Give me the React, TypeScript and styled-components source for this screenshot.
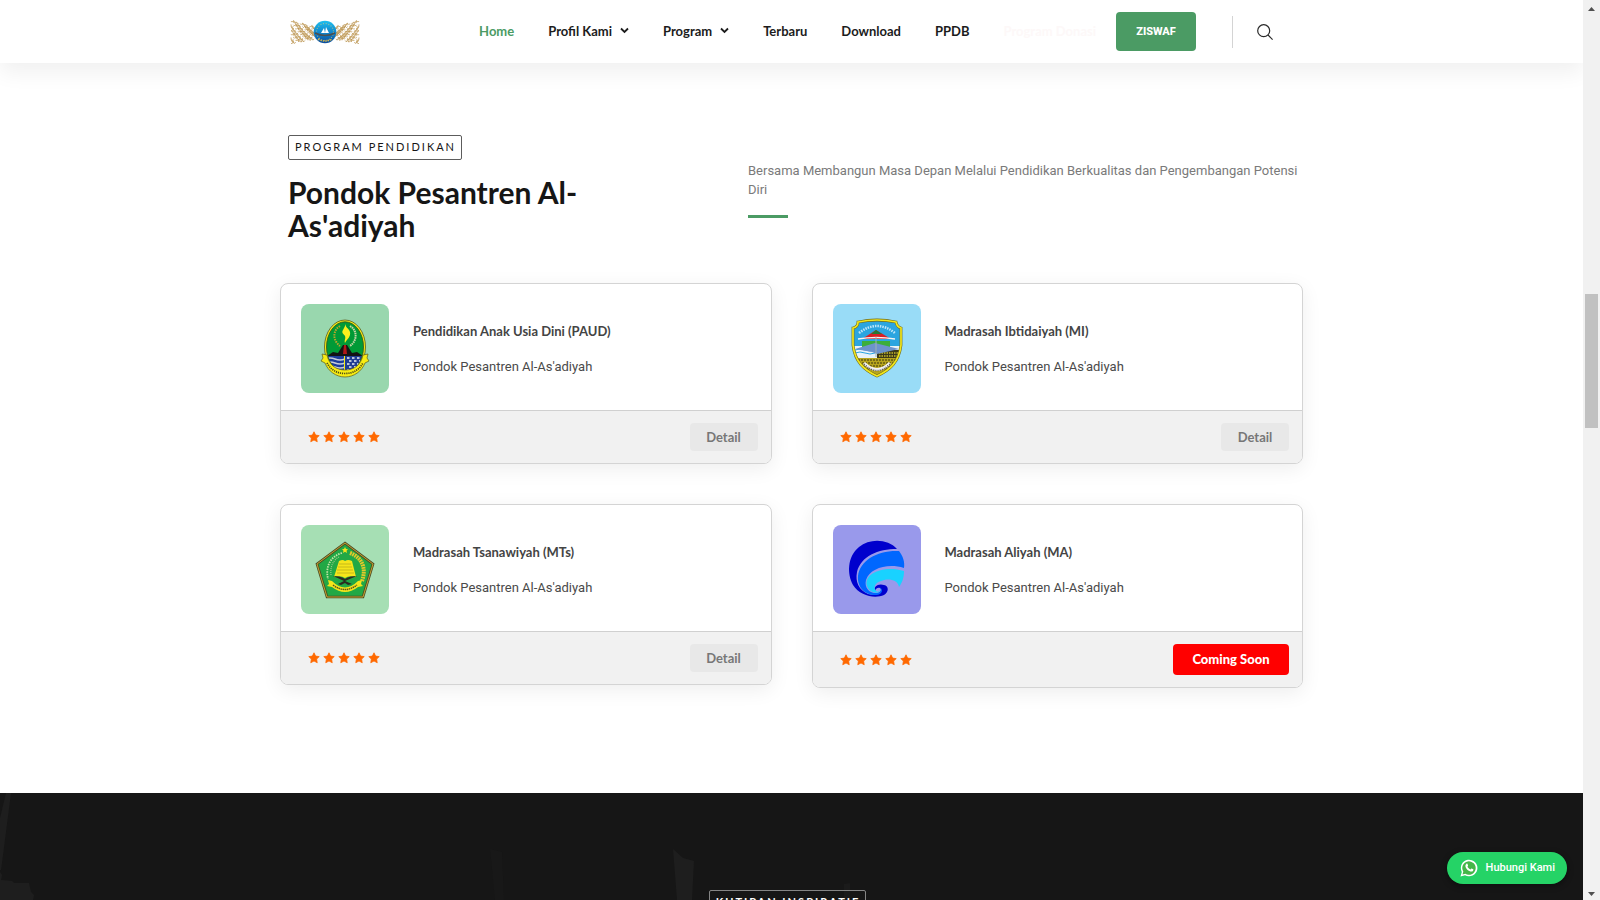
import React from "react";
import styled, { createGlobalStyle } from "styled-components";

const GREEN = "#4b9b64";
const HEADING = `Lato, "Liberation Sans", sans-serif`;
const BODY = `Roboto, "Liberation Sans", sans-serif`;

const GlobalStyle = createGlobalStyle`
  *, *::before, *::after { box-sizing: border-box; }
  body { margin: 0; background: #fff; font-family: ${BODY}; color: #161616; }
  h1, h2, h3, p, ul { margin: 0; padding: 0; }
  ul { list-style: none; }
  a { color: inherit; text-decoration: none; }
  button { border: 0; font: inherit; cursor: pointer; }
  svg { display: block; }
`;

const Window = styled.div`
  display: flex;
  height: 100vh;
  overflow: hidden;
`;

const Page = styled.div`
  position: relative;
  display: flex;
  flex-direction: column;
  flex: 1;
  min-width: 0;
  overflow: hidden;
`;

const Header = styled.header`
  position: relative;
  z-index: 2;
  background: #fff;
  box-shadow: 0 10px 20px rgba(0, 0, 0, 0.06);
`;

const HeaderInner = styled.div`
  display: flex;
  align-items: center;
  max-width: 1023px;
  margin: 0 auto;
  padding: 12px 30px 12px 10px;
`;

const Nav = styled.nav`
  margin-left: auto;
`;

const NavList = styled.ul`
  display: flex;
  gap: 34px;
`;

const NavLink = styled.a<{ $tone?: "active" | "faint" }>`
  display: flex;
  align-items: center;
  gap: 8px;
  padding-bottom: 2px;
  font: 700 13px/20px ${HEADING};
  color: ${(p) => (p.$tone === "active" ? GREEN : p.$tone === "faint" ? "#fdf8f8" : "#1c1c1c")};
`;

const DonateButton = styled.button`
  width: 80px;
  height: 39px;
  margin-left: 20px;
  border-radius: 4px;
  background: ${GREEN};
  color: #fff;
  font: 800 11px/16px ${BODY};
`;

const Divider = styled.span`
  width: 1px;
  height: 32px;
  margin: 0 24px 0 36px;
  background: #d4d4d4;
`;

const SearchButton = styled.button`
  padding: 0;
  background: none;
`;

const Programs = styled.main`
  width: 100%;
  max-width: 1023px;
  margin: 0 auto;
  padding: 72px 0 105px;
`;

const Intro = styled.div`
  display: grid;
  grid-template-columns: 460px 1fr;
  align-items: center;
  padding-left: 8px;
  margin-bottom: 40px;
`;

const Tag = styled.span<{ $dark?: boolean }>`
  display: inline-block;
  padding: 0 5px 1px 6px;
  border: 1px solid ${(p) => (p.$dark ? "#858585" : "#5c5c5c")};
  border-radius: 2px;
  color: ${(p) => (p.$dark ? "#fff" : "#161616")};
  font: ${(p) => (p.$dark ? 700 : 400)} 11px/22px ${HEADING};
  letter-spacing: 2px;
  text-transform: uppercase;
`;

const Title = styled.h1`
  max-width: 340px;
  margin-top: 16px;
  padding-bottom: 1px;
  font: 700 30px/33px ${HEADING};
`;

const Lead = styled.p`
  font-size: 13px;
  line-height: 19px;
  color: #7a7a7a;
`;

const Accent = styled.div`
  width: 40px;
  height: 3px;
  margin-top: 16px;
  background: ${GREEN};
`;

const CardGrid = styled.div`
  display: grid;
  grid-template-columns: 1fr 1fr;
  align-items: start;
  gap: 40px;
`;

const Card = styled.article`
  border: 1px solid #d4d4d4;
  border-radius: 8px;
  background: #fff;
  box-shadow: 0 5px 20px rgba(0, 0, 0, 0.07);
  overflow: hidden;
`;

const CardBody = styled.div`
  display: flex;
  align-items: center;
  gap: 24px;
  padding: 20px 20px 17px;
`;

const Tile = styled.div<{ $color: string }>`
  width: 88px;
  height: 89px;
  border-radius: 8px;
  background: ${(p) => p.$color};
`;

const CardText = styled.div`
  display: grid;
  gap: 16px;
`;

const CardTitle = styled.h2`
  font: 700 13px/19px ${HEADING};
  color: #444;
`;

const CardSub = styled.p`
  font-size: 13px;
  line-height: 19px;
  color: #4a4a4a;
`;

const CardFooter = styled.footer`
  display: flex;
  align-items: center;
  justify-content: space-between;
  padding: 12px 13px 12px 27px;
  border-top: 1px solid #d0d0d0;
  background: #f1f1f1;
`;

const Stars = styled.div`
  display: flex;
  gap: 3px;
`;

const CardButton = styled.button<{ $soon?: boolean }>`
  min-width: ${(p) => (p.$soon ? 116 : 68)}px;
  height: ${(p) => (p.$soon ? 31 : 28)}px;
  padding: 0 16px;
  border-radius: 4px;
  background: ${(p) => (p.$soon ? "#f00" : "#e8e8e8")};
  color: ${(p) => (p.$soon ? "#fff" : "#777")};
  font: ${(p) => (p.$soon ? 900 : 700)} 13px/19px ${HEADING};
`;

const Quotes = styled.section`
  position: relative;
  flex: 1 0 auto;
  padding: 97px 8px 0 0;
  background: #161616;
  text-align: center;
`;

const QuotesArt = styled.svg`
  position: absolute;
  left: 0;
  top: 0;
`;

const QuotesTag = styled(Tag)`
  position: relative;
`;

const WhatsApp = styled.a`
  position: absolute;
  right: 16px;
  bottom: 16px;
  z-index: 3;
  display: flex;
  align-items: center;
  gap: 8px;
  height: 32px;
  padding: 0 12px 0 13px;
  border-radius: 16px;
  background: #25d366;
  box-shadow: 0 2px 6px rgba(0, 0, 0, 0.4);
  color: #fff;
  font: 500 11px/16px ${BODY};
`;

const Scrollbar = styled.div`
  display: flex;
  flex-direction: column;
  width: 17px;
  padding: 0 2px;
  background: #f1f1f1;
`;

const Space = styled.div<{ $share: number }>`
  flex: ${(p) => p.$share};
`;

const Thumb = styled.div`
  flex: 134;
  background: #c1c1c1;
`;

function Arrow({ down = false }: { down?: boolean }) {
  return (
    <svg width="13" height="17" viewBox="0 0 13 17" fill="#505050" aria-hidden="true">
      {down ? <path d="M3 9h7L6.500 13z" /> : <path d="M3 11h7L6.500 7z" />}
    </svg>
  );
}

function Chevron() {
  return (
    <svg width="9" height="8" viewBox="0 0 9 8" fill="none" stroke="#1c1c1c" strokeWidth="1.800" aria-hidden="true">
      <path d="M1 1.500l3.500 3.500L8 1.500" />
    </svg>
  );
}

function BrandMark() {
  const strokes: string[] = [];
  for (let i = 0; i < 10; i++) {
    const x = 1 + i * 2.3;
    const reach = 11.5 - i * 0.6;
    for (let j = 0; j < 7; j++) {
      const y = 12 - reach + (j * reach * 2) / 7 + 0.6;
      const bend = (i * 3 + j * 5) % 4;
      const curve =
        bend === 0 ? "q1 2 2 0t1 2" : bend === 1 ? "l.3 2.600q1.500 1 2-.8" : bend === 2 ? "q2-.6 1.600 1.600t-1.400 1" : "l2 .4v2";
      strokes.push(`M${x.toFixed(1)} ${y.toFixed(1)}${curve}`);
    }
  }
  const wing = strokes.join("");
  return (
    <svg width="70" height="24" viewBox="0 0 70 24" fill="none" role="img" aria-label="Al-As'adiyah">
      <defs>
        <linearGradient id="globe" x1="0" y1="0" x2="0" y2="1">
          <stop offset="0" stopColor="#1fc0ee" />
          <stop offset=".5" stopColor="#1288cc" />
          <stop offset="1" stopColor="#0a4c9c" />
        </linearGradient>
      </defs>
      <g stroke="#bd9550" strokeWidth=".8">
        <path d={wing} />
        <g transform="matrix(-1 0 0 1 70 0)">
          <path d={wing} />
        </g>
      </g>
      <circle cx="35" cy="12" r="11.300" fill="url(#globe)" />
      <circle cx="35" cy="12" r="8.500" stroke="#d8c67a" strokeWidth="1.200" strokeDasharray="1 1.700" opacity=".7" />
      <path d="M31 13l3-5 1 5zM35 13l1-6 3 6z" fill="#fff" />
      <path d="M25 13q10 5 20 0" stroke="#4b5050" strokeWidth="1.500" />
      <path d="M28 19q7 4 14 0" stroke="#d8b54a" strokeWidth="1.500" strokeDasharray="1.500 1" />
    </svg>
  );
}

function WestJavaEmblem() {
  return (
    <svg viewBox="0 0 88 89" fill="none" role="img" aria-label="PAUD">
      <defs>
        <clipPath id="wj">
          <ellipse cx="44" cy="43" rx="18" ry="25" />
        </clipPath>
      </defs>
      <ellipse cx="44" cy="43" rx="20.500" ry="27" fill="#f7ec13" stroke="#5b5a1e" strokeWidth=".8" />
      <ellipse cx="44" cy="43" rx="18.500" ry="25.200" fill="#009a36" stroke="#33501c" strokeWidth=".8" />
      <g clipPath="url(#wj)">
        <path d="M24 52h20v20H24z" fill="#1c3d9a" />
        <path d="M24 55q5-2 10 0t10 0M24 59q5-2 10 0t10 0M24 63q5-2 10 0t10 0M28 67q4-2 8 0t8 0" stroke="#c6cbd8" strokeWidth="1.500" />
        <path d="M44 52h20v20H44z" fill="#203d94" />
        <path d="M46 54h16M48 57h12M46 60h14M48 63h12M46 66h10" stroke="#b9c3d8" strokeWidth="2.200" strokeDasharray="2.500 2.500" />
        <path d="M43.500 52v20" stroke="#f7ec13" strokeWidth="1" />
        <path d="M26 52l6-4 5 1 5-8h4l5 8 5-1 6 4z" fill="#141414" />
        <path d="M43 41h2l1 9h-4z" fill="#b01818" />
      </g>
      <path d="M44 39c-1-3 1-4 0-7-1-2-4-3-2-6l3-6c-1 4 3 4 4 8 1 5-3 7-5 11z" fill="#f9f01e" />
      <path d="M39 22c-7 4-8 14 0 20" stroke="#b9a52b" strokeWidth="2" strokeDasharray="1.500 1" />
      <path d="M49 22c7 4 8 14 0 20" stroke="#c9d6a8" strokeWidth="2" strokeDasharray="1.500 .7" />
      <path
        d="M21 50l5 1c2 10 9 15 18 15s16-5 18-15l5-1-1 4 2 3-4 2c-3 8-11 14-20 14S27 67 24 59l-4-2 2-3z"
        fill="#f7ec13"
        stroke="#5b5a1e"
        strokeWidth=".7"
      />
      <path d="M26 59c4 7 10 10.500 18 10.500S58 66 62 59" stroke="#4b4a16" strokeWidth="1.700" strokeDasharray="1.200 .9" />
    </svg>
  );
}

function TasikmalayaEmblem() {
  const shield = "M25 18q19-4 38 0q1 5 5 6v17c-2 17-11 25-24 31C31 66 22 58 20 41V24q5-1 5-6z";
  return (
    <svg viewBox="0 0 88 89" fill="none" role="img" aria-label="MI">
      <defs>
        <clipPath id="ts">
          <path d={shield} />
        </clipPath>
      </defs>
      <path d={shield} fill="#2ba5e0" />
      <g clipPath="url(#ts)">
        <path d="M20 42h48v13H20z" fill="#e9f3f8" />
        <path d="M22 46q5-2 10 0t10 0M22 49q5-2 10 0t10 0" stroke="#2ba5e0" strokeWidth="1" />
        <path d="M44 46h24v8H44z" fill="#3c3818" />
        <path d="M46 49h20M46 52h18" stroke="#c8b92b" strokeWidth="1.500" strokeDasharray="1.500 1" />
        <path d="M29 37h28v8H29z" fill="#3cae3a" />
        <path d="M43 26l15 9H29z" fill="#d91f26" />
        <path d="M43 26l6 4H38z" fill="#247a36" />
        <path d="M25 35q18-3 37 0" stroke="#f5f5f5" strokeWidth="1.500" />
        <path d="M22 45l20-6 24 6-22 5-5-2z" fill="#6d93cc" />
        <path d="M43 33v20" stroke="#9fb3b4" strokeWidth="1" />
        <path d="M20 54h48v18H20z" fill="#b7a51d" />
        <path d="M22 56h44M23 59h42M25 62h38M28 65h32" stroke="#3b3710" strokeWidth="1.200" strokeDasharray="2 1" />
        <path d="M31 59q13 13 26 0" stroke="#f3f3f3" strokeWidth="3" />
        <path d="M31 60q13 13 26 0" stroke="#555" strokeWidth="1.500" strokeDasharray="1 1.200" />
      </g>
      <path d="M26 29Q44 15 62 29" stroke="#bfe6f8" strokeWidth="2.500" strokeDasharray="1.500 1" />
      <path d={shield} stroke="#6f6a1c" strokeWidth="2.800" />
      <path d={shield} stroke="#f1e61c" strokeWidth="1.700" />
    </svg>
  );
}

function MinistryEmblem() {
  const pentagon = "M44 18L72 39 62 72H26L16 39z";
  return (
    <svg viewBox="0 0 88 89" fill="none" role="img" aria-label="MTs">
      <path d={pentagon} fill="#22a845" stroke="#4d4a26" strokeWidth="2.600" />
      <path d={pentagon} stroke="#cfae2c" strokeWidth=".9" />
      <path d="M44 22l1 2 2 .2-1.500 1.600.5 2.200-2-1.200-2 1.200.5-2.200L41 24.200l2-.2z" fill="#f5e51b" />
      <path d="M41 28C30 31 24 41 27 54" stroke="#c7e3a8" strokeWidth="1.800" strokeDasharray="1.500 1" />
      <path d="M38 32c-6 3-9 10-8 18" stroke="#9cc98a" strokeWidth="1.200" strokeDasharray="1 1" />
      <path d="M49 28c11 4 17 14 12 28" stroke="#e4c82a" strokeWidth="4" strokeDasharray="1.800 .7" />
      <path d="M38 36q4-2 6 0 3-2 7 0l4 16q-7-2-11 1-4-3-11-1z" fill="#f5e51b" />
      <path d="M38 39h12M37 42h14M36 45h16M36 48h17" stroke="#a99a1c" strokeWidth=".6" />
      <path d="M32 51q8 0 12 3 4-3 12-3-5 2-12 5l7 3-4 1-3-2-4 2-3-1 6-3q-6-3-11-5z" fill="#2b2a20" />
      <path d="M27 55l4 1q13 13 26 0l4-1-1 4 2 2-5 1q-13 10-26 0l-5-1 2-2z" fill="#f5e51b" />
      <path d="M32 60q12 9 24 0" stroke="#5a541c" strokeWidth="1.500" strokeDasharray="1.500 .6" />
    </svg>
  );
}

function WaveEmblem() {
  return (
    <svg viewBox="0 0 88 89" role="img" aria-label="MA">
      <path
        fill="#0000cd"
        d="M64 24C55 14 37 13 26 22C14 32 14 49 20 60C27 71 42 74 51 70C56 67 56 61 51 60C45 58 40 62 42 66C43 62 48 62 48 65C48 69 41 71 35 69C26 65 22 57 24 47C28 31 45 24 64 24Z"
      />
      <path
        fill="#0067ff"
        d="M66 26C70 31 72 37 71 43C55 38 37 43 33 55C31 63 37 69 44 68C49 67 49 63 45 62C51 63 50 69 44 70C34 71 24 64 25 51C27 35 45 25 66 26Z"
      />
      <path
        fill="#19d2ff"
        d="M71 46C71 53 69 58 66 62C65 54 54 53 48 56C42 58 40 62 43 66C44 67 46 67 47 65C47 69 37 69 34 61C30 48 52 40 71 46Z"
      />
    </svg>
  );
}

function StarRow() {
  return (
    <Stars role="img" aria-label="5">
      {[0, 1, 2, 3, 4].map((n) => (
        <svg key={n} width="12" height="12" viewBox="-1 -1 24 24" fill="#ff6900" stroke="#ff6900" strokeWidth="1.500" strokeLinejoin="round">
          <path d="M11 .5l3.300 6.700 7.200 1-5.200 5 1.200 7.300L11 17l-6.500 3.500 1.200-7.300-5.200-5 7.200-1z" />
        </svg>
      ))}
    </Stars>
  );
}

const navItems: { label: string; menu?: boolean; tone?: "active" | "faint" }[] = [
  { label: "Home", tone: "active" },
  { label: "Profil Kami", menu: true },
  { label: "Program", menu: true },
  { label: "Terbaru" },
  { label: "Download" },
  { label: "PPDB" },
  { label: "Program Donasi", tone: "faint" },
];

const programs = [
  { name: "Pendidikan Anak Usia Dini (PAUD)", color: "#99d7ae", art: <WestJavaEmblem />, soon: false },
  { name: "Madrasah Ibtidaiyah (MI)", color: "#99dcf7", art: <TasikmalayaEmblem />, soon: false },
  { name: "Madrasah Tsanawiyah (MTs)", color: "#a6dfb4", art: <MinistryEmblem />, soon: false },
  { name: "Madrasah Aliyah (MA)", color: "#9999eb", art: <WaveEmblem />, soon: true },
];

export default function App() {
  return (
    <Window>
      <GlobalStyle />
      <Page>
        <Header>
          <HeaderInner>
            <a href="#home">
              <BrandMark />
            </a>
            <Nav>
              <NavList>
                {navItems.map((item) => (
                  <li key={item.label}>
                    <NavLink href="#" $tone={item.tone}>
                      {item.label}
                      {item.menu && <Chevron />}
                    </NavLink>
                  </li>
                ))}
              </NavList>
            </Nav>
            <DonateButton>ZISWAF</DonateButton>
            <Divider />
            <SearchButton aria-label="Search">
              <svg width="16" height="16" viewBox="0 0 16 16" fill="none" stroke="#2a2a2a" strokeWidth="1.200">
                <circle cx="6.700" cy="6.700" r="6" />
                <path d="M11 11l4.600 4.600" />
              </svg>
            </SearchButton>
          </HeaderInner>
        </Header>

        <Programs>
          <Intro>
            <div>
              <Tag>Program Pendidikan</Tag>
              <Title>Pondok Pesantren Al-As'adiyah</Title>
            </div>
            <div>
              <Lead>
                Bersama Membangun Masa Depan Melalui Pendidikan Berkualitas dan Pengembangan Potensi Diri
              </Lead>
              <Accent />
            </div>
          </Intro>
          <CardGrid>
            {programs.map((program) => (
              <Card key={program.name}>
                <CardBody>
                  <Tile $color={program.color}>{program.art}</Tile>
                  <CardText>
                    <CardTitle>{program.name}</CardTitle>
                    <CardSub>Pondok Pesantren Al-As'adiyah</CardSub>
                  </CardText>
                </CardBody>
                <CardFooter>
                  <StarRow />
                  <CardButton $soon={program.soon}>{program.soon ? "Coming Soon" : "Detail"}</CardButton>
                </CardFooter>
              </Card>
            ))}
          </CardGrid>
        </Programs>

        <Quotes>
          <QuotesArt width="860" height="107" viewBox="0 0 860 107" fill="#1e1e1e" aria-hidden="true">
            <path d="M6 0h5L2 70l-1 7H0V25z" />
            <path d="M0 79l2 3-1 5 11 1 2 2h15l2 9 3 3-1 5H0z" />
            <path d="M673 56l10 9 11 3-2 39h-15z" />
            <path d="M490 56l12 3 2 48h-9z" fill="#181818" />
            <path d="M844 91l6-1v17h-6z" fill="#1b1b1b" />
          </QuotesArt>
          <QuotesTag $dark>Kutipan Inspiratif</QuotesTag>
        </Quotes>

        <WhatsApp href="#whatsapp">
          <svg width="18" height="18" viewBox="0 0 18 18" aria-hidden="true">
            <path d="M.5 17.500l1.300-4.600A8.300 8.300 0 1 1 5 16.200z" fill="#fff" />
            <path d="M2.500 15.500l.8-2.900A6.700 6.700 0 1 1 5.400 14.700z" fill="#45b649" />
            <path
              d="M6.300 4.900c.5-.5 1-.3 1.200.1l.6 1.400c.1.500-.5.900-.7 1.200.7 1.400 1.700 2.300 3.200 2.900.4-.3.700-1 1.100-.9l1.500.7c.6.3-.1 1.900-.9 2.200-2.800.8-7-2.700-6.900-5.700 0-.8.400-1.500.9-1.900z"
              fill="#fff"
            />
          </svg>
          Hubungi Kami
        </WhatsApp>
      </Page>

      <Scrollbar aria-hidden="true">
        <Arrow />
        <Space $share={277} />
        <Thumb />
        <Space $share={455} />
        <Arrow down />
      </Scrollbar>
    </Window>
  );
}
